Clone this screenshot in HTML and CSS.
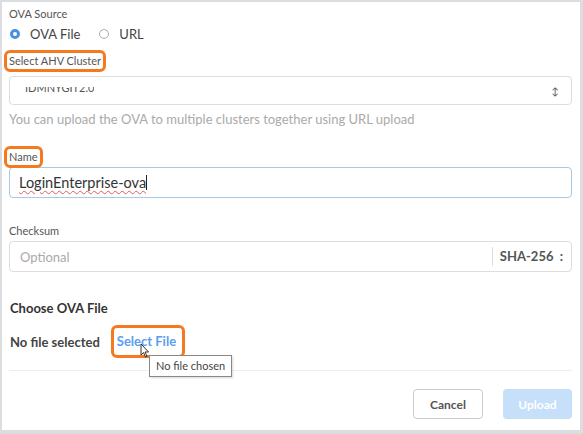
FILE: index.html
```html
<!DOCTYPE html>
<html lang="en">
<head>
    <meta charset="UTF-8">
    <meta name="viewport" content="width=device-width, initial-scale=1.0">
    <title>Upload Image</title>
    <link rel="stylesheet" href="styles.css">
</head>
<body>

    <div class="panel">
        <div class="field source">
            <div class="label">OVA Source</div>
            <div class="radios">
                <label class="radio checked"><span class="dot"></span>OVA File</label>
                <label class="radio"><span class="dot"></span>URL</label>
            </div>
        </div>

        <div class="field cluster">
            <div class="label"><span class="mark">Select AHV Cluster</span></div>
            <div class="select">
                <div class="cluster-value"><span>IDMNYGIT2.0</span></div>
                <span class="arrows">&#8597;</span>
            </div>
            <div class="help">You can upload the OVA to multiple clusters together using URL upload</div>
        </div>

        <div class="field">
            <div class="label"><span class="mark">Name</span></div>
            <div class="input focused"><span class="typed">LoginEnterprise-ova</span><span class="caret"></span></div>
        </div>

        <div class="field">
            <div class="label">Checksum</div>
            <div class="input checksum">
                <span class="placeholder">Optional</span>
                <span class="algo">SHA-256 <span class="algo-arrow">:</span></span>
            </div>
        </div>

        <div class="file-block">
            <h4>Choose OVA File</h4>
            <div class="file-row">
                <span class="file-name">No file selected</span>
                <span class="mark link-mark"><a class="select-file">Select File</a></span>
                <svg class="pointer" width="10" height="15" viewBox="0 0 10 15">
                    <path d="M1 1 L1 12 L3.5 9.5 L5.5 14 L7 13.3 L5 9 L8.5 9 Z" fill="#fff" stroke="#333" stroke-width="1"/>
                </svg>
                <div class="tip">No file chosen</div>
            </div>
        </div>

        <div class="footer">
            <button class="btn cancel">Cancel</button>
            <button class="btn upload" disabled>Upload</button>
        </div>
    </div>

</body>
</html>
```

FILE: styles.css
```css
body {
    margin: 0;
    background-color: #dcdde1;
    font-family: Lato, "Open Sans", sans-serif;
    color: #333;
}
.panel {
    background-color: #fff;
    margin: 2px 3px 0 2px;
    height: 428px;
    padding: 5px 8px 0 7px;
    box-sizing: border-box;
}
.label {
    font-size: 11px;
    color: #555;
    line-height: 14px;
}
.radios {
    display: flex;
    gap: 18px;
    margin-top: 5px;
    height: 16px;
    align-items: center;
}
.radio {
    display: flex;
    align-items: center;
    font-size: 13px;
    color: #444;
}
.radio .dot {
    width: 8px;
    height: 8px;
    border: 1px solid #aaa;
    border-radius: 50%;
    margin: 0 10px 0 1px;
}
.radio.checked .dot {
    border: 3px solid #4a90e2;
    width: 4px;
    height: 4px;
    background-color: #fff;
}
.mark {
    display: inline-block;
    border: 3px solid #f57a1f;
    border-radius: 6px;
    padding: 1px 2px;
    margin-left: -5px;
}
.cluster {
    margin-top: 8px;
}
.select {
    margin-top: 4px;
    height: 29px;
    border: 1px solid #ddd;
    border-radius: 4px;
    display: flex;
    align-items: center;
    justify-content: space-between;
    padding: 0 12px 0 15px;
    box-sizing: border-box;
}
.cluster-value {
    height: 8px;
    overflow: hidden;
    font-size: 11px;
    line-height: 14px;
    color: #555;
}
.cluster-value span {
    display: block;
    margin-top: -6px;
}
.arrows {
    font-size: 10px;
    color: #555;
}
.help {
    font-size: 13px;
    color: #aaa;
    margin-top: 6px;
    margin-bottom: 19px;
}
.input {
    margin-top: 3px;
    height: 31px;
    border: 1px solid #ddd;
    border-radius: 4px;
    display: flex;
    align-items: center;
    padding: 0 10px;
    box-sizing: border-box;
    font-size: 13px;
}
.input.focused {
    border-color: #a8c8e6;
    margin-top: -1px;
    margin-bottom: 26px;
    font-size: 14.5px;
    padding-left: 9px;
}
.typed {
    text-decoration: underline wavy #e35b5b;
    text-decoration-thickness: 1px;
    text-underline-offset: 2px;
}
.caret {
    width: 1px;
    height: 15px;
    background-color: #222;
}
.checksum {
    justify-content: space-between;
    padding-right: 8px;
    margin-top: 3px;
}
.placeholder {
    color: #aaa;
}
.algo {
    border-left: 1px solid #ddd;
    padding-left: 7px;
    height: 19px;
    line-height: 19px;
    font-weight: bold;
    color: #555;
    font-size: 13px;
}
.algo-arrow {
    margin-left: 3px;
}
.file-block h4 {
    margin: 28px 0 0 1px;
    font-size: 13px;
    color: #333;
}
.file-row {
    position: relative;
    display: flex;
    align-items: center;
    margin-top: 9px;
    padding-bottom: 12px;
    border-bottom: 1px solid #eee;
    font-size: 13px;
}
.file-name {
    font-weight: bold;
    color: #444;
    margin-left: 1px;
    margin-right: 16px;
}
.link-mark {
    padding: 5px 6px 6px 3px;
}
.select-file {
    color: #5a9ef0;
    font-weight: bold;
}
/* mouse pointer resting over the link */
.pointer {
    position: absolute;
    left: 131px;
    top: 18px;
}
.tip {
    position: absolute;
    left: 140px;
    top: 30px;
    border: 1px solid #888;
    background-color: #fff;
    font-size: 11px;
    color: #444;
    padding: 3px 6px 4px;
    box-shadow: 1px 1px 2px rgba(0,0,0,0.15);
}
.footer {
    display: flex;
    justify-content: flex-end;
    gap: 20px;
    margin-top: 18px;
}
.btn {
    height: 30px;
    border-radius: 4px;
    font-family: Lato, "Open Sans", sans-serif;
    font-size: 12px;
    font-weight: bold;
    padding: 0;
}
.cancel {
    width: 70px;
    background-color: #fff;
    border: 1px solid #ccc;
    color: #555;
}
.upload {
    width: 69px;
    border: none;
    background-color: #c5e0f8;
    color: #fff;
}
```
